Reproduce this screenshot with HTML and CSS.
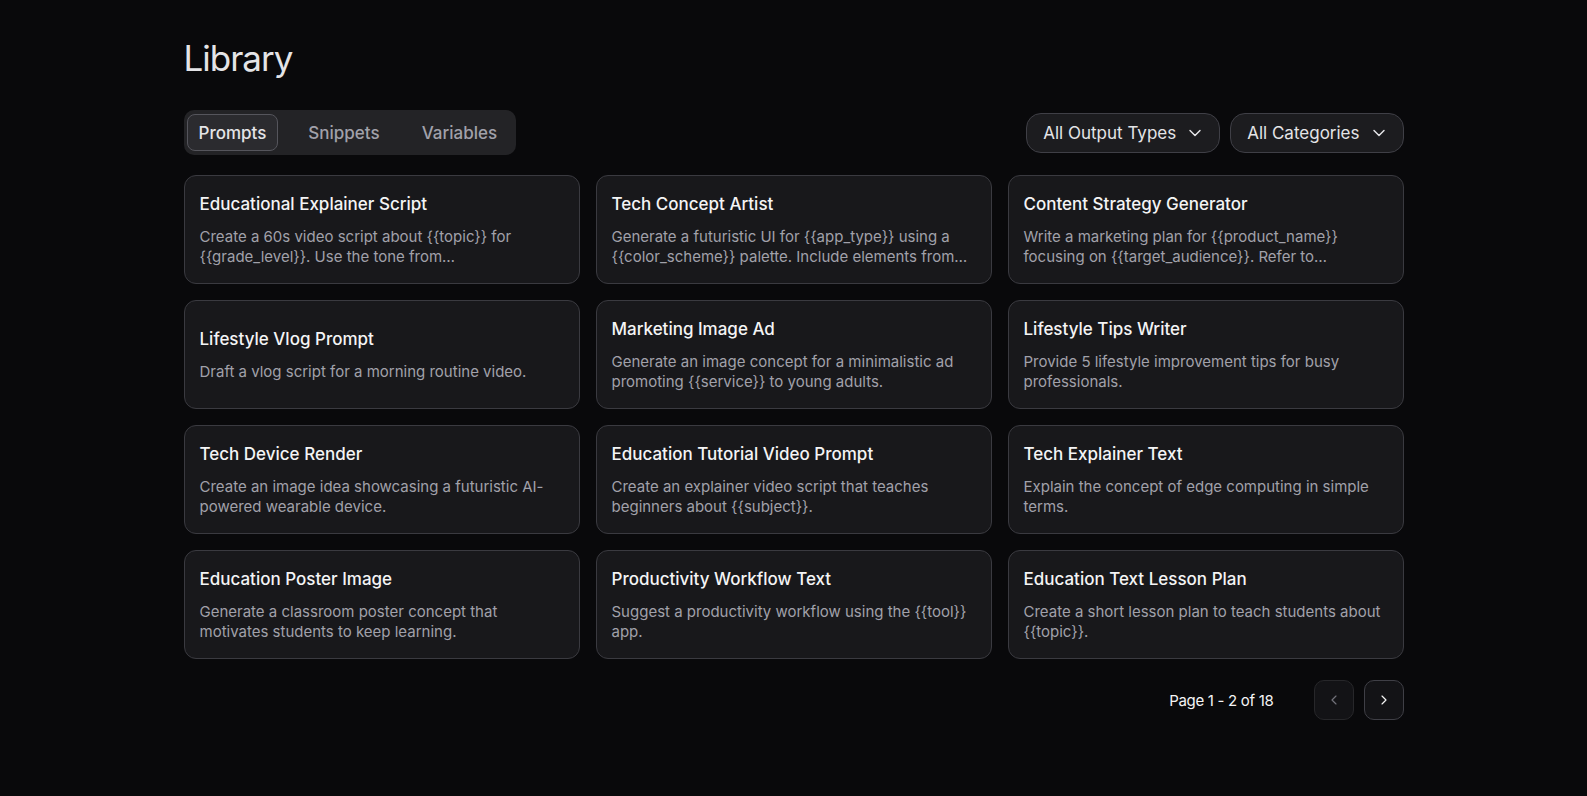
FILE: index.html
```html
<!DOCTYPE html>
<html lang="en">
<head>
  <meta charset="UTF-8" />
  <meta name="viewport" content="width=device-width, initial-scale=1.0" />
  <title>Library</title>
  <link rel="stylesheet" href="styles.css">
</head>
<body>
  <main class="library">
    <h1 class="page-title">Library</h1>

    <div class="toolbar">
      <div class="tabs">
        <button class="tab active">Prompts</button>
        <button class="tab">Snippets</button>
        <button class="tab">Variables</button>
      </div>
      <div class="filters">
        <button class="select">All Output Types
          <svg viewBox="0 0 24 24" width="20" height="20"><path d="M6 9l6 6 6-6"/></svg>
        </button>
        <button class="select">All Categories
          <svg viewBox="0 0 24 24" width="20" height="20"><path d="M6 9l6 6 6-6"/></svg>
        </button>
      </div>
    </div>

    <div class="card-grid">
      <div class="card">
        <h3>Educational Explainer Script</h3>
        <p>Create a 60s video script about {{topic}} for {{grade_level}}. Use the tone from…</p>
      </div>
      <div class="card">
        <h3>Tech Concept Artist</h3>
        <p>Generate a futuristic UI for {{app_type}} using a {{color_scheme}} palette. Include elements from…</p>
      </div>
      <div class="card">
        <h3>Content Strategy Generator</h3>
        <p>Write a marketing plan for {{product_name}} focusing on {{target_audience}}. Refer to…</p>
      </div>
      <div class="card">
        <h3>Lifestyle Vlog Prompt</h3>
        <p>Draft a vlog script for a morning routine video.</p>
      </div>
      <div class="card">
        <h3>Marketing Image Ad</h3>
        <p>Generate an image concept for a minimalistic ad promoting {{service}} to young adults.</p>
      </div>
      <div class="card">
        <h3>Lifestyle Tips Writer</h3>
        <p>Provide 5 lifestyle improvement tips for busy professionals.</p>
      </div>
      <div class="card">
        <h3>Tech Device Render</h3>
        <p>Create an image idea showcasing a futuristic AI-powered wearable device.</p>
      </div>
      <div class="card">
        <h3>Education Tutorial Video Prompt</h3>
        <p>Create an explainer video script that teaches beginners about {{subject}}.</p>
      </div>
      <div class="card">
        <h3>Tech Explainer Text</h3>
        <p>Explain the concept of edge computing in simple terms.</p>
      </div>
      <div class="card">
        <h3>Education Poster Image</h3>
        <p>Generate a classroom poster concept that motivates students to keep learning.</p>
      </div>
      <div class="card">
        <h3>Productivity Workflow Text</h3>
        <p>Suggest a productivity workflow using the {{tool}} app.</p>
      </div>
      <div class="card">
        <h3>Education Text Lesson Plan</h3>
        <p>Create a short lesson plan to teach students about {{topic}}.</p>
      </div>
    </div>

    <div class="pagination">
      <span class="page-info">Page 1 - 2 of 18</span>
      <div class="page-buttons">
        <button class="page-btn" disabled>
          <svg viewBox="0 0 24 24" width="16" height="16"><path d="M15 18l-6-6 6-6"/></svg>
        </button>
        <button class="page-btn">
          <svg viewBox="0 0 24 24" width="16" height="16"><path d="M9 18l6-6-6-6"/></svg>
        </button>
      </div>
    </div>
  </main>
</body>
</html>
```

FILE: styles.css
```css
* { box-sizing: border-box; margin: 0; padding: 0; }
body {
  background: #09090b;
  color: #f4f4f5;
  font-family: Inter, "Noto Sans", sans-serif;
}
button { font-family: inherit; cursor: pointer; }

.library {
  width: 1220px;
  margin: 0 auto;
  padding-top: 38px;
}
.page-title {
  font-size: 35px;
  line-height: 40px;
  font-weight: 400;
  letter-spacing: -1px;
  color: #e4e4e7;
}

.toolbar {
  margin-top: 32px;
  display: flex;
  justify-content: space-between;
  align-items: center;
}
.tabs {
  display: flex;
  padding: 4px 3px;
  background: #232326;
  border-radius: 10px;
  width: 332px;
  height: 45px;
}
.tab {
  background: none;
  border: 1px solid transparent;
  border-radius: 8px;
  color: #a1a1aa;
  font-size: 17px;
  font-weight: 500;
  padding: 0 11px;
  height: 37px;
  flex: 0 0 auto;
}
.tab.active {
  background: #2b2b2f;
  border-color: #55555c;
  color: #e4e4e7;
}
.tab + .tab { margin-left: 18px; }

.filters { display: flex; gap: 10px; }
.select {
  display: flex;
  align-items: center;
  gap: 9px;
  height: 40px;
  padding: 0 14px 0 16px;
  background: #1c1c1f;
  border: 1px solid #3f3f46;
  border-radius: 15px;
  color: #e4e4e7;
  font-size: 17px;
}
.select svg, .page-btn svg {
  fill: none;
  stroke: currentColor;
  stroke-width: 1.75;
  stroke-linecap: round;
  stroke-linejoin: round;
}

.card-grid {
  margin-top: 20px;
  display: grid;
  grid-template-columns: repeat(3, 1fr);
  grid-auto-rows: 109px;
  gap: 16px;
}
.card {
  display: flex;
  flex-direction: column;
  justify-content: center;
  padding: 16px 15px;
  background: #18181b;
  border: 1px solid #3a3a40;
  border-radius: 12px;
}
.card h3 {
  font-size: 17px;
  line-height: 24px;
  font-weight: 500;
  color: #f4f4f5;
  margin-bottom: 11px;
}
.card p {
  font-size: 15px;
  line-height: 20px;
  color: #a1a1aa;
}

.pagination {
  margin-top: 21px;
  display: flex;
  justify-content: flex-end;
  align-items: center;
  gap: 40px;
}
.page-info {
  font-size: 15px;
  letter-spacing: -0.3px;
  color: #f4f4f5;
}
.page-buttons { display: flex; gap: 10px; }
.page-btn {
  width: 40px;
  height: 40px;
  display: flex;
  align-items: center;
  justify-content: center;
  background: #131316;
  border: 1px solid #3f3f46;
  border-radius: 10px;
  color: #f4f4f5;
}
.page-btn:disabled {
  border-color: #27272a;
  color: #71717a;
  cursor: default;
}
```
